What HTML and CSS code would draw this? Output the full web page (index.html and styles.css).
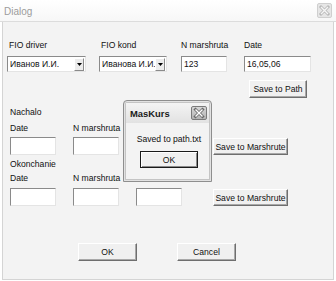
FILE: index.html
```html
<!DOCTYPE html>
<html>
<head>
<meta charset="utf-8">
<link rel="stylesheet" href="styles.css">
</head>
<body>
<div class="win">
  <div class="titlebar">
    <span class="title">Dialog</span>
    <span class="tclose">
      <svg width="13" height="13" viewBox="0 0 13 13"><path d="M3 3 L10 10 M10 3 L3 10" stroke="#b8b8b8" stroke-width="3" stroke-linecap="square"/><path d="M3 3 L10 10 M10 3 L3 10" stroke="#f6f6f6" stroke-width="1.4"/></svg>
    </span>
  </div>
  <div class="client">
    <div class="toprow">
      <div class="field w1">
        <div class="lbl">FIO driver</div>
        <div class="combo"><span class="ctext">Иванов И.И.</span><span class="arrow"><svg width="5" height="3" viewBox="0 0 5 3"><path d="M0 0H5L2.5 3Z" fill="#000"/></svg></span></div>
      </div>
      <div class="field w2">
        <div class="lbl">FIO kond</div>
        <div class="combo"><span class="ctext">Иванова И.И.</span><span class="arrow"><svg width="5" height="3" viewBox="0 0 5 3"><path d="M0 0H5L2.5 3Z" fill="#000"/></svg></span></div>
      </div>
      <div class="field w3">
        <div class="lbl">N marshruta</div>
        <div class="input">123</div>
      </div>
      <div class="field w4">
        <div class="lbl">Date</div>
        <div class="input">16,05,06</div>
      </div>
    </div>
    <div class="pathrow"><div class="btn bpath">Save to Path</div></div>

    <div class="sect s1">Nachalo</div>
    <div class="seg seg1">
      <div class="lbl">Date</div>
      <div class="lbl">N marshruta</div>
      <div class="lbl"></div>
      <div></div>
      <div class="input tall"></div>
      <div class="input tall"></div>
      <div class="input tall"></div>
      <div class="btn bmar">Save to Marshrute</div>
    </div>

    <div class="sect s2">Okonchanie</div>
    <div class="seg seg2">
      <div class="lbl">Date</div>
      <div class="lbl">N marshruta</div>
      <div class="lbl"></div>
      <div></div>
      <div class="input tall"></div>
      <div class="input tall"></div>
      <div class="input tall"></div>
      <div class="btn bmar">Save to Marshrute</div>
    </div>

    <div class="bottom">
      <div class="btn bok">OK</div>
      <div class="btn bok">Cancel</div>
    </div>
  </div>

  <div class="popup">
    <div class="ptitle">
      <span class="ptext">MasKurs</span>
      <span class="pclose">
        <svg width="12" height="12" viewBox="0 0 12 12"><path d="M2.5 2.5 L9.5 9.5 M9.5 2.5 L2.5 9.5" stroke="#6a6a6a" stroke-width="3" stroke-linecap="square"/><path d="M2.5 2.5 L9.5 9.5 M9.5 2.5 L2.5 9.5" stroke="#ffffff" stroke-width="1.4"/></svg>
      </span>
    </div>
    <div class="pbody">
      <div class="msg">Saved to path.txt</div>
      <div class="btn pok">OK</div>
    </div>
  </div>
</div>
</body>
</html>
```
FILE: styles.css
```css
html, body {
  margin: 0;
  padding: 0;
  background: #ffffff;
}
body {
  font-family: "Liberation Sans", Arial, sans-serif;
  font-size: 8.6px;
  color: #111;
}
.win {
  position: relative;
  width: 336px;
  height: 281px;
  display: flex;
  flex-direction: column;
}
.titlebar {
  height: 21px;
  border-bottom: 1px solid #dcdcdc;
  background: linear-gradient(#ffffff, #f7f7f7);
  display: flex;
  align-items: center;
  justify-content: space-between;
  padding: 0 4px 0 4px;
}
.title {
  font-size: 10px;
  color: #9c9c9c;
  padding-top: 1px;
}
.tclose {
  width: 15px;
  height: 15px;
  box-sizing: border-box;
  border: 1px solid #cfcfcf;
  border-radius: 2px;
  background: #e6e6e6;
  display: flex;
  align-items: center;
  justify-content: center;
}
.client {
  flex: 1;
  margin: 0 2px 1px 2px;
  border: 1px solid #d4d4d4;
  border-top: none;
  background: #f3f3f3;
  padding: 18px 0 0 4px;
}
.lbl {
  line-height: 11px;
  height: 11px;
  white-space: nowrap;
  padding-left: 2px;
}
.toprow {
  display: flex;
}
.field {
  display: flex;
  flex-direction: column;
  gap: 5px;
}
.w1 { width: 79px; }
.w2 { width: 68px; margin-left: 13px; }
.w3 { width: 46px; margin-left: 14px; }
.w4 { width: 67px; margin-left: 17px; }
.w3 .lbl, .w4 .lbl { padding-left: 0; }
.combo {
  height: 16px;
  box-sizing: border-box;
  background: #fff;
  border: 1px solid;
  border-color: #8a8a8a #e4e4e4 #e4e4e4 #8a8a8a;
  display: flex;
  align-items: center;
  justify-content: space-between;
  padding-left: 2px;
}
.ctext { white-space: nowrap; overflow: hidden; }
.arrow {
  width: 10px;
  height: 13px;
  margin-right: 1px;
  box-sizing: border-box;
  background: #ececec;
  border: 1px solid;
  border-color: #fff #8a8a8a #8a8a8a #fff;
  display: flex;
  align-items: center;
  justify-content: center;
  flex: none;
}
.input {
  height: 16px;
  box-sizing: border-box;
  background: #fff;
  border: 1px solid;
  border-color: #8a8a8a #e4e4e4 #e4e4e4 #8a8a8a;
  padding-left: 2px;
  line-height: 14px;
}
.input.tall { height: 18px; }
.btn {
  box-sizing: border-box;
  background: #f0f0f0;
  border: 1px solid;
  border-color: #ffffff #6e6e6e #6e6e6e #ffffff;
  box-shadow: inset -1px -1px 0 #a8a8a8;
  display: flex;
  align-items: center;
  justify-content: center;
  white-space: nowrap;
}
.pathrow {
  display: flex;
  justify-content: flex-end;
  margin-top: 8px;
  padding-right: 26px;
}
.bpath { width: 58px; height: 18px; }
.sect {
  line-height: 11px;
  height: 11px;
  padding-left: 3px;
}
.s1 { margin-top: 9px; }
.s2 { margin-top: 4px; }
.seg {
  display: grid;
  grid-template-columns: 46px 46px 46px 90px;
  column-gap: 17px;
  padding-left: 3px;
}
.seg .lbl { padding-left: 0; }
.seg1 { margin-top: 5px; row-gap: 3px; }
.seg2 { margin-top: 3px; row-gap: 4px; }
.bmar {
  width: 75px;
  height: 17px;
  margin-left: 14px;
  align-self: end;
}
.bottom {
  display: flex;
  gap: 40px;
  margin-top: 37px;
  padding-left: 71px;
}
.bok { width: 59px; height: 18px; }

.popup {
  position: absolute;
  left: 123px;
  top: 100px;
  width: 89px;
  height: 82px;
  box-sizing: border-box;
  border: 1px solid #8e8e8e;
  border-radius: 4px 4px 0 0;
  box-shadow: inset 0 0 0 1px #e2e2e2, inset 0 0 0 2px #c4c4c4;
  background: #f3f3f3;
  display: flex;
  flex-direction: column;
}
.ptitle {
  height: 20px;
  box-sizing: border-box;
  margin: 2px 2px 0 2px;
  background: linear-gradient(#f4f4f4, #e2e2e2);
  display: flex;
  align-items: center;
  justify-content: space-between;
  padding: 0 2px 0 4px;
}
.ptext {
  font-weight: bold;
  font-size: 9.4px;
  color: #1a1a1a;
}
.pclose {
  width: 16px;
  height: 14px;
  box-sizing: border-box;
  border: 1px solid #7a7a7a;
  border-radius: 2px;
  background: linear-gradient(#d6d6d6, #b4b4b4);
  display: flex;
  align-items: center;
  justify-content: center;
}
.pbody {
  display: flex;
  flex-direction: column;
  align-items: center;
  padding-left: 3px;
}
.msg {
  margin-top: 11px;
  line-height: 11px;
  white-space: nowrap;
}
.pok {
  margin-top: 6px;
  width: 58px;
  height: 17px;
  border: 1px solid #1a1a1a;
  box-shadow: inset 1px 1px 0 #fff, inset -1px -1px 0 #8a8a8a;
}
```
